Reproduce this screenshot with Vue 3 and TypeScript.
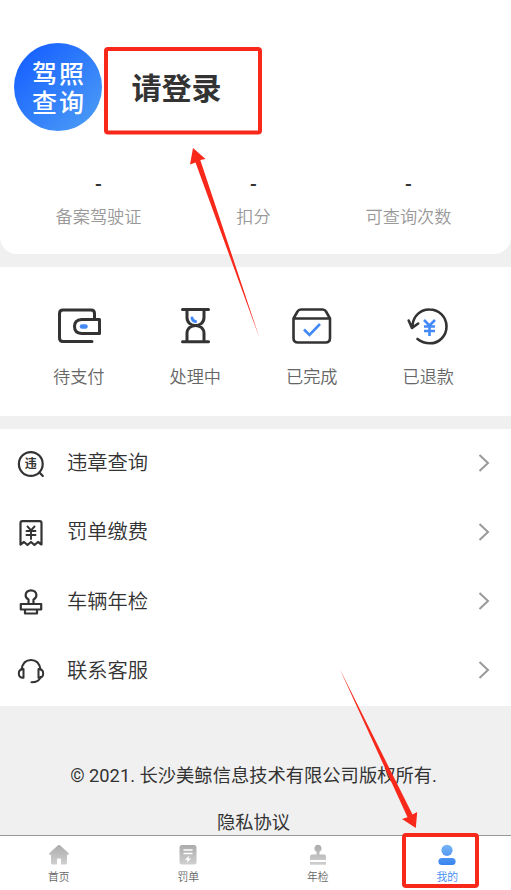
<script setup lang="ts">
interface Stat {
  label: string
  value: string
}

const stats: Stat[] = [
  { label: '备案驾驶证', value: '-' },
  { label: '扣分', value: '-' },
  { label: '可查询次数', value: '-' },
]
const orders: string[] = ['待支付', '处理中', '已完成', '已退款']
const services: string[] = ['违章查询', '罚单缴费', '车辆年检', '联系客服']
const tabs: string[] = ['首页', '罚单', '年检', '我的']
const activeTab = 3
</script>

<template>
  <div class="page">
    <header class="profile">
      <div class="user">
        <div class="logo"><span>驾照</span><span>查询</span></div>
        <div class="login">请登录</div>
      </div>
      <div class="stats">
        <div v-for="s in stats" :key="s.label" class="stat">
          <span class="value">{{ s.value }}</span>
          <span class="label">{{ s.label }}</span>
        </div>
      </div>
    </header>

    <section class="orders">
      <div v-for="(name, i) in orders" :key="name" class="order">
        <svg class="order-icon" viewBox="0 0 48 44" fill="none" stroke="#333" stroke-width="3" stroke-linecap="round" stroke-linejoin="round">
          <template v-if="i === 0">
            <path d="M39.500 14V8.500Q39.500 5 36 5H8Q4.500 5 4.500 8.500V33Q4.500 36.500 8 36.500H37" />
            <path d="M44.500 14.500H26.500Q19.500 15 19.500 21.500T26.500 28.500H44.500Z" />
            <path d="M27 21.500h3.500" stroke="#4389f7" stroke-width="4.500" />
          </template>
          <template v-else-if="i === 1">
            <path d="M11.500 4.500H37.500M11.500 36.800H37.500M16 5V12.500C16 18 20.500 20.500 24.500 20.500S33 18 33 12.500V5M16 36.500V28.500C16 23 20.500 20.500 24.500 20.500S33 23 33 28.500V36.500" />
            <path d="M21 13Q21.500 16 24.500 16.500" stroke="#4389f7" />
          </template>
          <template v-else-if="i === 2">
            <path d="M5.500 13.500L9.500 6.500Q10.500 4.500 13 4.500H34.500Q37 4.500 38 6.500L42 13.500V33Q42 37.500 37.500 37.500H10Q5.500 37.500 5.500 33ZM5.500 13.500H42" stroke-width="2.600" />
            <path d="M16 24.500L21.500 30L32 19" stroke="#4389f7" stroke-width="2.600" stroke-linecap="butt" stroke-linejoin="miter" />
          </template>
          <template v-else>
            <path d="M8.500 20C9.500 10.500 17 4.300 25.500 4.500C35 4.500 42.500 12 42.500 21.500C42.500 31 35 38.300 26 38.300Q19 38.300 13.500 34M4.700 15.500L8 23L14.200 18.500" stroke-width="2.600" />
            <path d="M20 15L25.500 20.500L31 15M25.500 20V31M20 21.500H31M20 26H31" stroke="#4389f7" stroke-width="2.600" stroke-linecap="butt" />
          </template>
        </svg>
        <span class="order-name">{{ name }}</span>
      </div>
    </section>

    <section class="services">
      <div v-for="(name, i) in services" :key="name" class="service">
        <svg class="service-icon" viewBox="0 0 30 30" fill="none" stroke="#333" stroke-width="2.200" stroke-linejoin="round" stroke-linecap="round">
          <template v-if="i === 0">
            <circle cx="14.800" cy="15" r="11.900" />
            <path d="M23.500 23.500l3.300 3.400" />
            <text x="14.800" y="19.300" class="seal" stroke="none">违</text>
          </template>
          <template v-else-if="i === 1">
            <path d="M4.500 26.500V5Q4.500 3.200 6.300 3.200H23.700Q25.500 3.200 25.500 5V26.500L22 24L18.500 27L15 24L11.500 27L8 24Z" />
            <path d="M11.500 8.500L15 12.300L18.500 8.500M15 12V21M10.500 13H19.500M10.500 17H19.500" stroke-width="1.900" />
          </template>
          <template v-else-if="i === 2">
            <path d="M12.500 16.500V12.500C10.500 11.500 9.600 10 9.600 8.300C9.600 5.300 12 3.300 15 3.300S20.400 5.300 20.400 8.300C20.400 10 19.500 11.500 17.500 12.500V16.500M4.800 17H25.200V22.500H4.800ZM9 23V26.500H21V23" />
          </template>
          <template v-else>
            <path d="M5.500 13.500C6.500 7 10 4 15 4S23.500 7 24.500 13.500M15.500 26.300C20 26.300 23.500 24.500 24.500 21" stroke-width="2" />
            <path d="M7.500 13V21.700Q2.800 22 2.800 17.500T7.500 13ZM22.500 13V21.700Q27.200 22 27.200 17.500T22.500 13Z" stroke-width="2" />
          </template>
        </svg>
        <span class="service-name">{{ name }}</span>
        <svg class="chevron" viewBox="0 0 12 18"><path d="M1.500 1L10 9L1.500 17" fill="none" stroke="#999" stroke-width="2" /></svg>
      </div>
    </section>

    <footer class="footer">
      <div class="copyright">© 2021. 长沙美鲸信息技术有限公司版权所有.</div>
      <div class="privacy">隐私协议</div>
    </footer>

    <nav class="tabbar">
      <div v-for="(name, i) in tabs" :key="name" class="tab" :class="{ active: i === activeTab }">
        <svg class="tab-icon" viewBox="0 0 22 22">
          <defs>
            <linearGradient id="grey" x1="0" y1="0" x2="0" y2="22" gradientUnits="userSpaceOnUse"><stop offset="0" stop-color="#aaa" /><stop offset="1" stop-color="#d2d2d2" /></linearGradient>
            <linearGradient id="blue" x1="0" y1="0" x2="0" y2="22" gradientUnits="userSpaceOnUse"><stop offset="0" stop-color="#7ab8f8" /><stop offset="1" stop-color="#3580ee" /></linearGradient>
          </defs>
          <path v-if="i === 0" fill="url(#grey)" d="M10 1.300Q11 .6 12 1.300L20.700 9.200Q21.500 10.500 20 10.700H19V19Q19 20.500 17.500 20.500H13V15.500Q13 14.500 12 14.500H10Q9 14.500 9 15.500V20.500H4.500Q3 20.500 3 19V10.700H2Q.5 10.500 1.300 9.200Z" />
          <template v-else-if="i === 1">
            <rect x="2.500" y="1" width="17" height="19.500" rx="2.500" fill="url(#grey)" />
            <path d="M6.500 6h9M6.500 9.500h9" stroke="#fff" stroke-width="1.400" />
            <path d="M12 11.500L8 16H10.500L10 19L14 14.500H11.500Z" fill="#fff" />
          </template>
          <path v-else-if="i === 2" fill="url(#grey)" d="M11 .8A3.700 3.700 0 0 1 12.500 7.800V10.500H17Q19 10.500 19 12.500V16H3V12.500Q3 10.500 5 10.500H9.500V7.800A3.700 3.700 0 0 1 11 .8ZM3 18H19V20.800H3Z" />
          <template v-else>
            <circle cx="11" cy="6.300" r="5.600" fill="url(#blue)" />
            <rect x="2.400" y="14" width="17.200" height="7" rx="3.500" fill="url(#blue)" />
          </template>
        </svg>
        <span>{{ name }}</span>
      </div>
    </nav>

    <svg class="marks" viewBox="0 0 511 890">
      <g fill="none" stroke="#f8281b" stroke-width="4">
        <rect x="106" y="49" width="154" height="83.500" rx="2" />
        <rect x="404" y="835" width="73" height="51" rx="2" />
      </g>
      <path fill="#f8281b" d="M193 148L205.500 159L200.300 160L259.500 338L195.500 162.500L190 164.500ZM415.800 828L417.200 812L412.500 814.500L339.500 668.500L407.500 817.300L402 819Z" />
    </svg>
  </div>
</template>

<style>
body {
  margin: 0;
  background: #f0f0f0;
}
</style>

<style scoped>
.page {
  position: relative;
  display: flex;
  flex-direction: column;
  height: 890px;
  overflow: hidden;
  background: #f0f0f0;
  color: #333;
  font-family: "Noto Sans CJK SC", sans-serif;
  font-weight: 350;
}
.profile,
.orders,
.services,
.tabbar {
  flex-shrink: 0;
}
.profile {
  box-sizing: border-box;
  height: 254px;
  padding-top: 43px;
  background: #fff;
  border-radius: 0 0 17px 17px;
}
.user {
  display: flex;
  align-items: center;
  gap: 29.500px;
  height: 88px;
  padding-left: 14px;
}
.logo {
  display: flex;
  flex-direction: column;
  align-items: center;
  justify-content: center;
  box-sizing: border-box;
  width: 88px;
  height: 88px;
  padding-left: 2px;
  border-radius: 50%;
  background: linear-gradient(135deg, #1a64ff 15%, #4999f6 90%);
  color: #fff;
  font-size: 25px;
  font-weight: 500;
  letter-spacing: 2px;
  line-height: 29px;
}
.login {
  padding-bottom: 3px;
  font-size: 30px;
  font-weight: 700;
  line-height: 40px;
}
.stats {
  display: flex;
  padding: 41px 25px 0 21px;
}
.stat {
  display: flex;
  flex: 1;
  flex-direction: column;
  align-items: center;
}
.value {
  font: 500 20px/24px Roboto, sans-serif;
}
.label {
  margin-top: 8px;
  color: #999;
  font-size: 17.200px;
  line-height: 24px;
}
.orders {
  display: flex;
  box-sizing: border-box;
  height: 149px;
  margin-top: 13px;
  padding: 37.500px 24.500px 0 20.500px;
  background: #fff;
}
.order {
  display: flex;
  flex: 1;
  flex-direction: column;
  align-items: center;
}
.order-icon {
  width: 48px;
  height: 44px;
}
.order-name {
  margin-top: 15.500px;
  color: #666;
  font-size: 17.200px;
  line-height: 24px;
}
.services {
  display: flex;
  flex-direction: column;
  box-sizing: border-box;
  height: 277px;
  margin-top: 13px;
  background: #fff;
}
.service {
  display: flex;
  flex: 1;
  align-items: center;
  padding: 0 21px 0 16px;
}
.service-icon {
  width: 30px;
  height: 30px;
}
.seal {
  fill: #333;
  font-size: 12px;
  font-weight: 700;
  text-anchor: middle;
}
.service-name {
  flex: 1;
  margin-left: 21px;
  padding-bottom: 5px;
  font-size: 20.300px;
  line-height: 28px;
}
.chevron {
  width: 12px;
  height: 18px;
  margin-bottom: 2px;
}
.footer {
  display: flex;
  flex: 1;
  flex-direction: column;
  align-items: center;
  padding-right: 4px;
  font-family: Roboto, "Noto Sans CJK SC", sans-serif;
  font-size: 18.300px;
  font-weight: 400;
  line-height: 24px;
}
.copyright {
  margin-top: 58px;
  white-space: nowrap;
}
.privacy {
  margin-top: 23px;
}
.tabbar {
  display: flex;
  box-sizing: border-box;
  width: 518px;
  height: 55px;
  margin-left: -6px;
  padding-top: 8px;
  border-top: 1px solid #999;
  background: #fff;
}
.tab {
  display: flex;
  flex: 1;
  flex-direction: column;
  align-items: center;
  color: #666;
  font-size: 10.800px;
  line-height: 16px;
}
.tab.active {
  color: #3e8bf5;
}
.tab-icon {
  width: 22px;
  height: 22px;
  margin-bottom: 2px;
}
.marks {
  position: absolute;
  top: 0;
  left: 0;
  width: 511px;
  height: 890px;
  pointer-events: none;
}
</style>
